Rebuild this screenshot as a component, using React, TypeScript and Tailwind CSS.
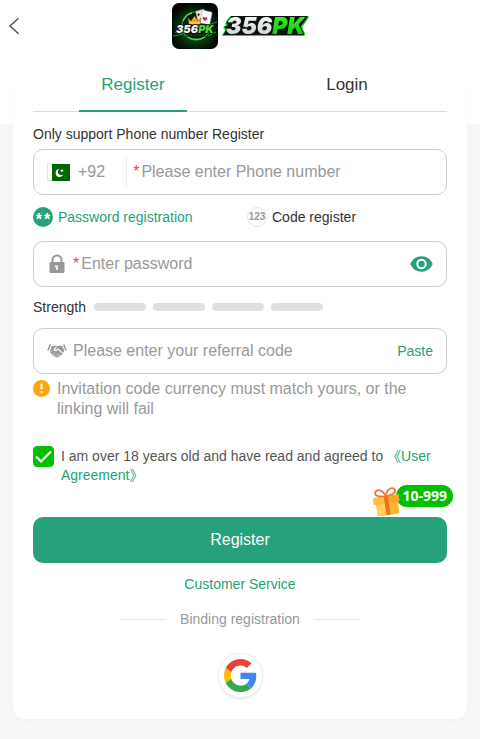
import React, { useState } from "react";

function BackIcon() {
    return (
        <svg viewBox="0 0 12 18" className="h-[18px] w-3" fill="none" stroke="#555" strokeWidth="1.5">
            <path d="M10.500 1.200 2 9l8.500 7.800" />
        </svg>
    );
}

function AppBadge() {
    return (
        <svg viewBox="0 0 46 46" className="size-[46px]" aria-hidden="true">
            <defs>
                <radialGradient id="badgeGlow" cx="50%" cy="55%" r="55%">
                    <stop offset="0" stopColor="#14752a" />
                    <stop offset="0.6" stopColor="#06330f" />
                    <stop offset="1" stopColor="#020803" />
                </radialGradient>
            </defs>
            <rect width="46" height="46" rx="7" fill="url(#badgeGlow)" />
            <circle cx="24" cy="23" r="14" fill="#041a08" stroke="#1f9a35" strokeWidth="1.200" />
            <path d="M16 34q8 5 17 0M11 18q3-7 9-8" fill="none" stroke="#4be04d" strokeWidth="1.400" />
            <path d="M1 33q10-1 14-5M45 19q-6 1-9 5M3 29l8 3M36 33l8-4" fill="none" stroke="#20a832" strokeWidth="0.900" />
            <rect x="25" y="7" width="9" height="13" rx="1.200" fill="#e4e6e4" stroke="#8a8f8a" strokeWidth="0.400" transform="rotate(-14 29 14)" />
            <rect x="29" y="8" width="10" height="13" rx="1.200" fill="#fafafa" stroke="#999" strokeWidth="0.400" transform="rotate(12 34 15)" />
            <path d="M33 18c-2.500-1.700-3-3.300-1.800-4 .9-.4 1.600.3 1.800 1 .3-.7 1.300-1 2-.4 1 .9.200 2.300-2 3.400z" fill="#d8262c" />
            <path d="m26.500 10 1.300 1.500-1.300 2-1-2z" fill="#222" />
            <path d="m16 15 3 3 3.500-5 3.500 5 3-3-1 6.500H17z" fill="#f2a52a" stroke="#8b4a08" strokeWidth="0.500" />
            <path d="M17 20h11" stroke="#ffdc72" strokeWidth="1" />
            <text x="4" y="29.500" fontFamily="Inter, sans-serif" fontWeight="900" fontStyle="italic" fontSize="11" stroke="#07130a" strokeWidth="1.500" paintOrder="stroke" fill="#f4f4f4">
                356<tspan fill="#4fdb32">PK</tspan>
            </text>
            <path d="M12 32h20" stroke="#48704d" strokeWidth="0.700" strokeDasharray="2 1" />
        </svg>
    );
}

function Wordmark() {
    return (
        <svg viewBox="0 0 86 30" className="h-[30px] w-[86px] overflow-visible" role="img" aria-label="356PK">
            <defs>
                <linearGradient id="silver" x1="0" y1="0" x2="0" y2="1">
                    <stop offset="0" stopColor="#ffffff" />
                    <stop offset="1" stopColor="#c9c9cf" />
                </linearGradient>
                <linearGradient id="lime" x1="0" y1="0" x2="0" y2="1">
                    <stop offset="0" stopColor="#3df52c" />
                    <stop offset="1" stopColor="#13b816" />
                </linearGradient>
            </defs>
            <g className="[filter:drop-shadow(1px_0_0_#2bd630)_drop-shadow(-1px_0_0_#2bd630)_drop-shadow(0_1px_0_#2bd630)]">
                <path d="M9 5h77l-3 5-4 5 2 9H1l4-6-3-2 4-2-2-2 4-2z" fill="#0a160b" />
                <text
                    x="4"
                    y="23"
                    fontFamily="Inter, sans-serif"
                    fontWeight="900"
                    fontStyle="italic"
                    fontSize="23"
                    stroke="#0a160b"
                    strokeWidth="2"
                    strokeLinejoin="round"
                    paintOrder="stroke"
                    fill="url(#silver)"
                >
                    356<tspan fill="url(#lime)">PK</tspan>
                </text>
            </g>
        </svg>
    );
}

function FlagIcon() {
    return (
        <svg viewBox="0 0 23 17" className="h-[17px] w-[23px]" aria-hidden="true">
            <rect x="0.500" y="0.500" width="22" height="16" fill="#fff" stroke="#e4e8e4" />
            <rect x="5" width="18" height="17" fill="#046404" />
            <path d="M12.500 5a4 4 0 1 0 4 5.200A3.300 3.300 0 1 1 12.500 5z" fill="#fff" />
            <path d="m14.800 4.800.6 1.200 1.300-.2-.9 1 .7 1.200-1.300-.4-.9.900-.1-1.300-1.200-.6 1.300-.4z" fill="#fff" />
        </svg>
    );
}

function LockIcon() {
    return (
        <svg viewBox="-2 0 18 20" className="h-5 w-[18px] shrink-0" aria-hidden="true">
            <path d="M3.500 9V6a4.500 4.500 0 0 1 9 0v3" fill="none" stroke="#999" strokeWidth="2" />
            <rect x="0.500" y="8" width="15" height="11" rx="1" fill="#999" />
            <path d="M6 11.500h2.800V16H7.200v-2.800H6z" fill="#fff" />
        </svg>
    );
}

function HandshakeIcon() {
    return (
        <svg viewBox="0 0 20 16" className="h-4 w-5 shrink-0" aria-hidden="true">
            <path d="M3.300 1.500.9 7.500M16.700 1.500l2.400 6" fill="none" stroke="#999" strokeWidth="1.500" />
            <path d="M4.800 3 8 2.500l2.200.8 2.500-.8 2.600.5 2 5-1.300 1.700-.9 1.800-1.700 1-1.500 1.300-2 .8-2.500-1-3-2.600-1.800-2z" fill="#999" />
            <path d="M9.500 3.800 7 6.700c1 1.300 2.700.7 4-.6l4.500 3.900" fill="none" stroke="#fff" strokeWidth="1.100" />
            <path d="m3 9.600 2.200-2M5 11.600l1.800-1.900M7 13.400l1.700-1.900" stroke="#fff" strokeWidth="0.700" />
            <path d="m10.800 10.500 2 1.600M9.700 12l1.500 1.300" stroke="#fff" strokeWidth="0.700" />
        </svg>
    );
}

function EyeIcon() {
    return (
        <svg viewBox="0 0 23 16" className="h-4 w-[23px]" aria-hidden="true">
            <path d="M.3 8C2.500 3 6.500.3 11.500.3S20.500 3 22.700 8c-2.200 5-6.200 7.700-11.200 7.700S2.500 13 .3 8z" fill="#26a17b" />
            <circle cx="11.500" cy="8" r="4.200" fill="none" stroke="#fff" strokeWidth="2" />
        </svg>
    );
}

function GiftIcon() {
    return (
        <svg viewBox="0 0 30 30" className="size-[30px]" aria-hidden="true">
            <g transform="rotate(-9 15 18)">
                <path d="M4 16h22v11q0 2-2 2H6q-2 0-2-2z" fill="#ffb52c" />
                <path d="M4 16h9v13H6q-2 0-2-2z" fill="#ffd05a" />
                <path d="M3.500 10h23q1.500 0 1.500 1.500V17H2v-5.500Q2 10 3.500 10z" fill="#ffa629" />
                <path d="M3.500 10H13v7H2v-5.500Q2 10 3.500 10z" fill="#ffc048" />
                <path d="M13 10h4v19h-4z" fill="#f0701e" />
                <path d="M15 10C9 10 4 8.500 5 5.200 6.500 1 13 3 15 10zM15 10c6 0 11-1.500 10-4.800C23.500 1 17 3 15 10z" fill="none" stroke="#e87a3a" strokeWidth="1.800" />
            </g>
        </svg>
    );
}

function GoogleIcon() {
    return (
        <svg viewBox="0 0 48 48" className="size-[33px]" aria-hidden="true">
            <path fill="#ea4335" d="M24 9.500c3.540 0 6.710 1.220 9.210 3.600l6.850-6.850C35.900 2.380 30.470 0 24 0 14.620 0 6.510 5.380 2.560 13.220l7.980 6.190C12.430 13.720 17.740 9.500 24 9.500z" />
            <path fill="#4285f4" d="M46.980 24.550c0-1.570-.15-3.090-.38-4.550H24v9.020h12.940c-.58 2.960-2.260 5.480-4.780 7.180l7.730 6c4.510-4.180 7.090-10.360 7.090-17.650z" />
            <path fill="#fbbc05" d="M10.530 28.590A14.500 14.500 0 0 1 9.770 24c0-1.600.27-3.140.76-4.590l-7.980-6.190A24 24 0 0 0 0 24c0 3.880.92 7.540 2.560 10.780z" />
            <path fill="#34a853" d="M24 48c6.480 0 11.930-2.130 15.890-5.810l-7.730-6c-2.150 1.450-4.920 2.300-8.160 2.300-6.260 0-11.570-4.220-13.470-9.910l-7.980 6.190C6.510 42.620 14.620 48 24 48z" />
        </svg>
    );
}

const fieldClass = "flex h-[46px] items-center rounded-[10px] border border-[#ccc] px-[13px]";
const inputClass = "h-full min-w-0 flex-1 bg-transparent text-base text-[#333] outline-none placeholder:text-[#999]";

export default function App() {
    const [tab, setTab] = useState("register");
    const [mode, setMode] = useState("password");
    const [phone, setPhone] = useState("");
    const [password, setPassword] = useState("");
    const [showPassword, setShowPassword] = useState(false);
    const [referral, setReferral] = useState("");
    const [agreed, setAgreed] = useState(true);

    const pasteReferral = async () => {
        const text = await navigator.clipboard.readText();
        setReferral(text);
    };

    return (
        <div className="min-h-screen bg-[#f7f7f7] pb-5 font-['Liberation_Sans','Noto_Sans_CJK_SC',sans-serif] text-sm text-[#333]">
            <header className="grid h-[124px] grid-cols-[1fr_auto_1fr] items-start bg-white px-2">
                <button aria-label="Back" className="mt-[17px] w-3">
                    <BackIcon />
                </button>
                <div className="mt-[3px] flex items-center gap-1">
                    <AppBadge />
                    <Wordmark />
                </div>
            </header>

            <main className="mx-[13px] -mt-[52px] rounded-xl bg-white px-5 pb-[21px] shadow-[0_2px_8px_rgba(0,0,0,0.02)]">
                <div className="flex h-10 justify-between border-b border-[#ddd] px-[46px]">
                    <button
                        onClick={() => setTab("register")}
                        className={`-mb-px w-[108px] border-b-2 pb-3 text-[17px] leading-6 ${tab === "register" ? "border-[#26a17b] text-[#26a17b]" : "border-transparent"}`}
                    >
                        Register
                    </button>
                    <button
                        onClick={() => setTab("login")}
                        className={`-mb-px w-[108px] border-b-2 pb-3 text-[17px] leading-6 ${tab === "login" ? "border-[#26a17b] text-[#26a17b]" : "border-transparent"}`}
                    >
                        Login
                    </button>
                </div>

                <label htmlFor="phone" className="mt-3 mb-[5px] block leading-5">
                    Only support Phone number Register
                </label>
                <div className={fieldClass}>
                    <button className="flex items-center gap-2 text-base text-[#999]">
                        <FlagIcon />
                        +92
                    </button>
                    <span className="mr-[6px] ml-[21px] h-8 w-px bg-[#eee]" />
                    <span className="mr-[2px] text-base text-[#e5484d]">*</span>
                    <input id="phone" type="tel" value={phone} onChange={(e) => setPhone(e.target.value)} placeholder="Please enter Phone number" className={inputClass} />
                </div>

                <div className="mt-3 mb-[14px] grid grid-cols-2 gap-[14px]">
                    <button onClick={() => setMode("password")} className={`flex items-center gap-[5px] ${mode === "password" ? "text-[#26a17b]" : ""}`}>
                        <span className="flex size-5 items-center justify-center gap-[2px] rounded-full bg-[#26a17b] pt-[6px] text-base leading-4 font-bold text-white">
                            <span>*</span>
                            <span>*</span>
                        </span>
                        Password registration
                    </button>
                    <button onClick={() => setMode("code")} className={`flex items-center gap-[5px] ${mode === "code" ? "text-[#26a17b]" : ""}`}>
                        <span className="flex size-5 items-center justify-center rounded-full border border-[#e8e8e8] text-[10px] font-bold text-[#999]">123</span>
                        Code register
                    </button>
                </div>

                <div className={fieldClass}>
                    <LockIcon />
                    <span className="mr-[2px] ml-2 text-base text-[#e5484d]">*</span>
                    <input
                        aria-label="Password"
                        type={showPassword ? "text" : "password"}
                        value={password}
                        onChange={(e) => setPassword(e.target.value)}
                        placeholder="Enter password"
                        className={inputClass}
                    />
                    <button aria-label="Show password" onClick={() => setShowPassword(!showPassword)}>
                        <EyeIcon />
                    </button>
                </div>

                <div className="mt-[10px] mb-[11px] flex items-center gap-2 leading-5">
                    Strength
                    <div className="flex gap-[7px]">
                        {[1, 2, 3, 4].map((level) => (
                            <span key={level} className="h-2 w-[52px] rounded-full bg-[#e0e0e0]" />
                        ))}
                    </div>
                </div>

                <div className={fieldClass}>
                    <HandshakeIcon />
                    <input
                        aria-label="Referral code"
                        value={referral}
                        onChange={(e) => setReferral(e.target.value)}
                        placeholder="Please enter your referral code"
                        className={`${inputClass} ml-[6px]`}
                    />
                    <button onClick={pasteReferral} className="text-[#26a17b]">
                        Paste
                    </button>
                </div>

                <div className="mt-[5px] flex items-start gap-[7px] text-base leading-5 text-[#999]">
                    <svg viewBox="0 0 17 17" className="mt-px size-[17px] shrink-0" aria-hidden="true">
                        <circle cx="8.500" cy="8.500" r="8.500" fill="#faa613" />
                        <path d="M8.500 3.800v5.500M8.500 11.300v2" stroke="#fff" strokeWidth="2" />
                    </svg>
                    <p>Invitation code currency must match yours, or the linking will fail</p>
                </div>

                <div className="mt-[27px] flex items-start gap-[7px]">
                    <span className="relative size-[21px] shrink-0">
                        <input
                            id="agree"
                            type="checkbox"
                            checked={agreed}
                            onChange={(e) => setAgreed(e.target.checked)}
                            className="peer block size-[21px] appearance-none rounded-[4px] border border-[#ccc] checked:border-[#04be02] checked:bg-[#04be02]"
                        />
                        <svg viewBox="0 0 21 21" className="pointer-events-none absolute inset-0 hidden size-[21px] peer-checked:block" fill="none" stroke="#fff" strokeWidth="2.200">
                            <path d="m3 10.500 5 5 10-10" />
                        </svg>
                    </span>
                    <p className="pt-px leading-[19px] text-[#555]">
                        <label htmlFor="agree">I am over 18 years old and have read and agreed to </label>
                        <a href="#agreement" className="text-[#26a17b]">
                            《User Agreement》
                        </a>
                    </p>
                </div>

                <div className="relative mt-8">
                    <button className="h-[46px] w-full rounded-[10px] bg-[#26a17b] text-base text-white">Register</button>
                    <div className="absolute -top-8 -right-[6px] flex items-start">
                        <div className="relative z-10 mt-px">
                            <GiftIcon />
                        </div>
                        <span className="-ml-[6px] rounded-full bg-[#04be02] px-[6px] font-['Open_Sans',sans-serif] text-sm leading-[22px] font-bold text-white">10-999</span>
                    </div>
                </div>

                <a href="#service" className="mx-auto mt-[11px] block w-fit leading-5 text-[#26a17b]">
                    Customer Service
                </a>

                <div className="mt-[15px] flex items-center justify-center gap-[14px] leading-5 text-[#999]">
                    <span className="h-px w-[45px] bg-[#e5e5e5]" />
                    Binding registration
                    <span className="h-px w-[45px] bg-[#e5e5e5]" />
                </div>

                <button aria-label="Sign in with Google" className="mx-auto mt-6 flex size-[45px] items-center justify-center rounded-full border border-[#f1f1f1] bg-white shadow-sm">
                    <GoogleIcon />
                </button>
            </main>
        </div>
    );
}
